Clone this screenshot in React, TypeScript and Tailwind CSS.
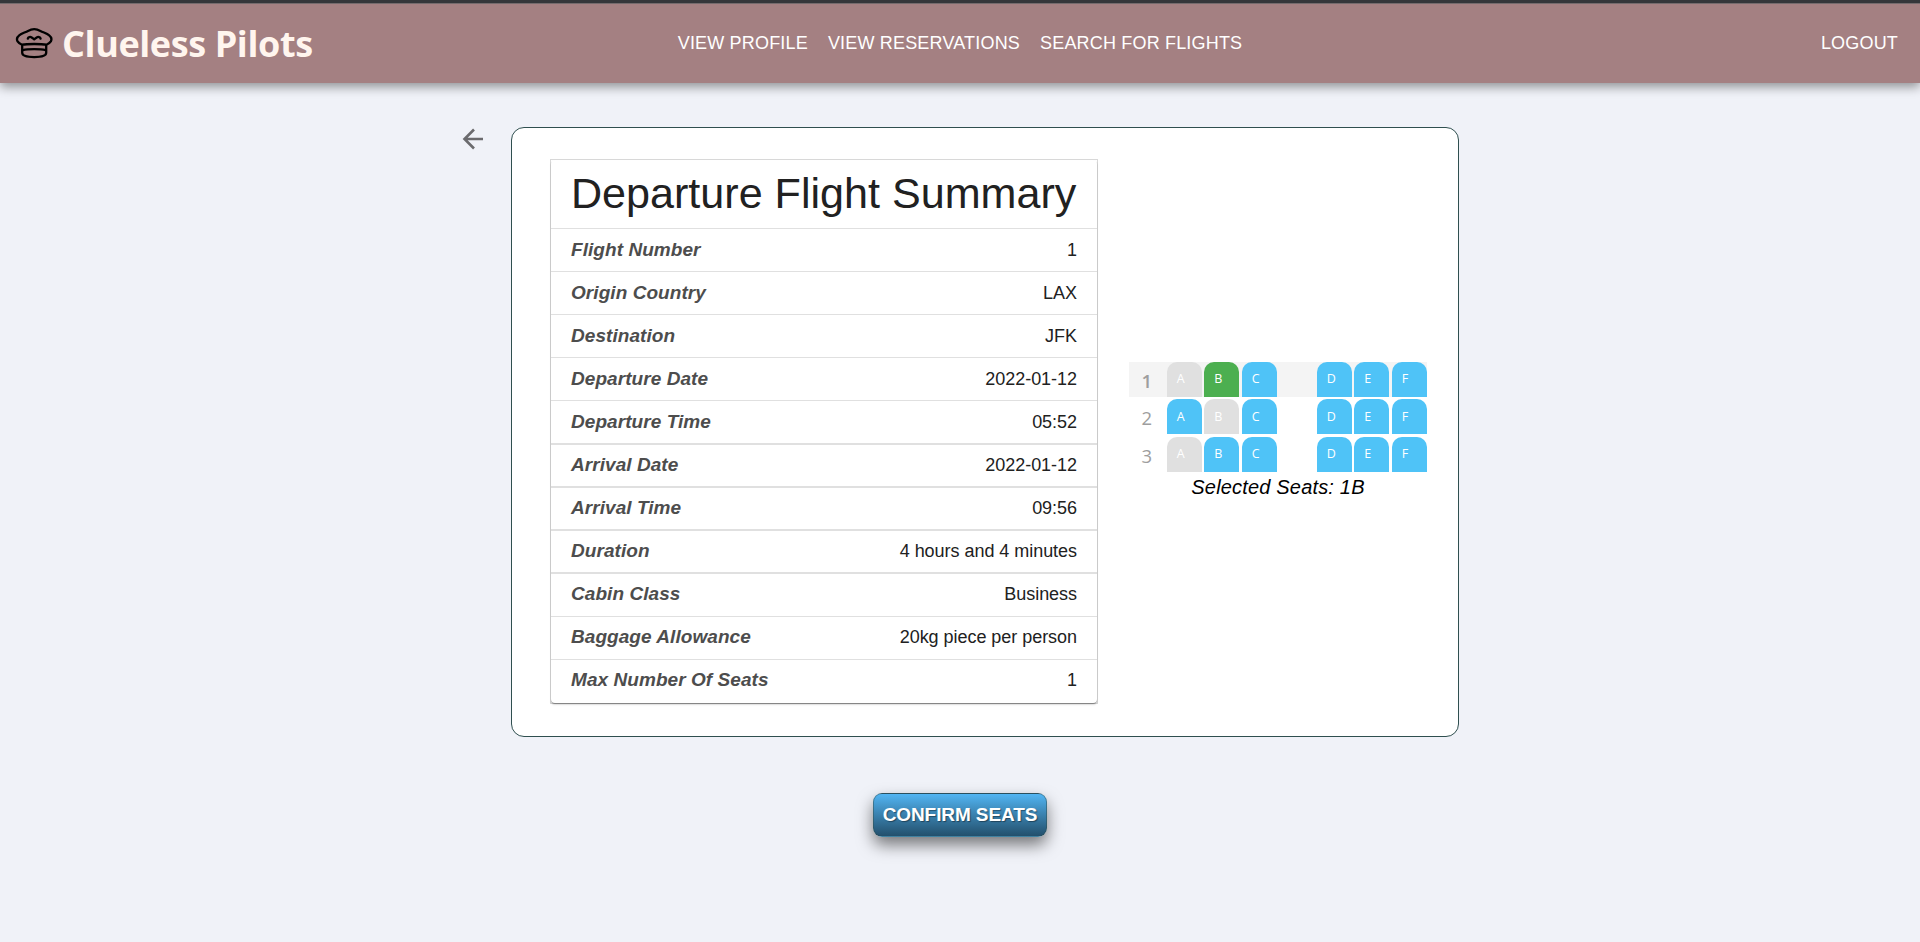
const rows: [string, string][] = [
  ['Flight Number', '1'],
  ['Origin Country', 'LAX'],
  ['Destination', 'JFK'],
  ['Departure Date', '2022-01-12'],
  ['Departure Time', '05:52'],
  ['Arrival Date', '2022-01-12'],
  ['Arrival Time', '09:56'],
  ['Duration', '4 hours and 4 minutes'],
  ['Cabin Class', 'Business'],
  ['Baggage Allowance', '20kg piece per person'],
  ['Max Number Of Seats', '1'],
];

const taken = ['1A', '2B', '3A'];
const selected = '1B';

function rowClass(i: number) {
  if (i < 4) return 'h-[43px] border-b pt-[10px]';
  if (i === 4) return 'h-[44px] border-b-2 pt-[10px]';
  if (i < 8) return 'h-[43px] border-b-2 pt-[9px]';
  if (i === rows.length - 1) return 'h-[43px] pt-[9px]';
  return 'h-[43px] border-b pt-[9px]';
}

function PilotHat() {
  return (
    <svg className="block h-[31px] w-[38px]" viewBox="0 0 38 31" fill="none" stroke="#000" strokeWidth="2.300" strokeLinecap="round" strokeLinejoin="round">
      <path d="M19.200 1.200c-2.400 0-4 .5-6.200 1.700C10 4.500 6.500 5.500 4.200 7.300 2 9 1.600 11.500 2.600 13.400c.9 1.500 2.400 2.500 4.400 3.300 3.300-.6 7.500-.7 12.200-.7s8.900.1 12.200.7c2-.8 3.500-1.800 4.400-3.300 1-1.900.6-4.400-1.600-6.100-2.300-1.800-5.800-2.800-8.800-4.400-2.200-1.200-3.800-1.700-6.200-1.700z" />
      <path d="M12.800 10.600c.4-1.600 2.400-2.100 3.900-1.200.8.500 1.700 1.300 2.500 1.900.8-.6 1.700-1.400 2.500-1.900 1.500-.9 3.500-.4 3.900 1.200" />
      <path d="M7.200 17.500v7.300c0 3 5.300 4.300 12 4.300s12-1.300 12-4.300v-7.300" />
      <path d="M7.800 22.200c3-.8 6.900-1 11.400-1s8.400.2 11.400 1" />
    </svg>
  );
}

function Seat({ row, letter }: { row: number; letter: string }) {
  const id = `${row}${letter}`;
  const color = taken.includes(id) ? 'bg-[#e0e0e0]' : id === selected ? 'bg-[#4caf50]' : 'bg-[#4fc3f7]';
  return (
    <div className={`flex h-[35px] w-[35px] items-center rounded-t-[10px] pl-[10px] pt-px text-[12.500px] text-white ${color}`}>
      {letter}
    </div>
  );
}

function SeatRow({ row }: { row: number }) {
  return (
    <div className={`flex w-[298px] ${row === 1 ? 'bg-[#f4f4f4]' : ''}`}>
      <div className={`flex h-[35px] w-[37.800px] shrink-0 items-center justify-center pr-[2px] pt-[3px] text-[18.500px] text-[#9e9e9e] ${row === 1 ? 'font-semibold' : ''}`}>
        {row}
      </div>
      <div className="flex gap-[2.500px]">
        {['A', 'B', 'C'].map((l) => <Seat key={l} row={row} letter={l} />)}
      </div>
      <div className="ml-[40px] flex gap-[2.500px]">
        {['D', 'E', 'F'].map((l) => <Seat key={l} row={row} letter={l} />)}
      </div>
    </div>
  );
}

export default function App() {
  return (
    <div className="flex h-[942px] w-full flex-col overflow-hidden bg-[#f0f2f8] font-['Liberation_Sans',Arial,sans-serif]">
      <header className="grid h-[83px] shrink-0 grid-cols-[1fr_auto_1fr] items-center border-t-[3px] border-[#35363a] bg-[#a48082] px-[15px] shadow-[0_4px_10px_rgba(0,0,0,0.4),inset_0_1px_0_#756b6d]">
        <div className="flex items-center gap-[9px]">
          <PilotHat />
          <span className="whitespace-nowrap pt-px font-['Open_Sans','Noto_Sans',sans-serif] text-[36px] font-bold leading-[48px] tracking-[-0.400px] text-[#fff5ee]">Clueless Pilots</span>
        </div>
        <nav className="flex gap-[20px] text-[18px] tracking-[0.180px] text-white">
          <a>VIEW PROFILE</a>
          <a>VIEW RESERVATIONS</a>
          <a>SEARCH FOR FLIGHTS</a>
        </nav>
        <a className="justify-self-end pr-[7px] text-[18px] tracking-[0.180px] text-white">LOGOUT</a>
      </header>

      <main className="flex flex-col items-center pt-[44px]">
        <div className="flex items-start">
          <svg className="ml-px mr-[27px] mt-[1px] block size-[22px]" viewBox="0 0 22 22" fill="none" stroke="#6b6b6e" strokeWidth="2.600">
            <path d="M21 11H3M12 1.500 2.500 11l9.500 9.500" />
          </svg>
          <section className="flex h-[610px] w-[948px] items-center rounded-[13px] border border-[#2f4f4f] bg-white pl-[38px]">
            <div className="mb-px h-[545px] w-[548px] border border-[#d8d8d8]">
              <div className="h-full rounded-[4px] shadow-[0_1px_1px_rgba(0,0,0,0.35),0_2px_2px_rgba(0,0,0,0.1)]">
                <h1 className="flex h-[69px] items-center border-b border-[#e0e0e0] px-[20px] pb-px text-[43.100px] leading-none text-[#212121]">
                  <span className="whitespace-nowrap">Departure Flight Summary</span>
                </h1>
                {rows.map(([label, value], i) => (
                  <div key={label} className={`flex items-baseline justify-between border-[#e0e0e0] px-[20px] ${rowClass(i)}`}>
                    <span className="text-[19px] font-bold italic leading-[21px] tracking-[0.060px] text-[#4d4d4d]">{label}</span>
                    <span className="text-[18px] leading-[20px] tracking-[-0.040px] text-[#212121]">{value}</span>
                  </div>
                ))}
              </div>
            </div>
            <div className="-mt-[4px] ml-[31px] flex w-[298px] flex-col items-center gap-[2.500px] font-['Open_Sans','Noto_Sans',sans-serif]">
              <SeatRow row={1} />
              <SeatRow row={2} />
              <SeatRow row={3} />
              <p className="mt-[0.500px] font-['Liberation_Sans',Arial,sans-serif] text-[20px] italic leading-[24px] tracking-[0.180px] text-black">Selected Seats: 1B</p>
            </div>
          </section>
        </div>
        <button className="mt-[56px] flex h-[44px] w-[174px] items-center justify-center rounded-[9px] border border-[#2f4f4f]/50 bg-linear-to-b from-[#52b5f3] to-[#23506d] text-[19px] font-bold tracking-[-0.100px] text-white shadow-[0_8px_16px_rgba(0,0,0,0.5)] [text-shadow:1px_1px_1px_rgba(0,0,0,0.4)]">
          <span className="whitespace-nowrap">CONFIRM SEATS</span>
        </button>
      </main>
    </div>
  );
}
